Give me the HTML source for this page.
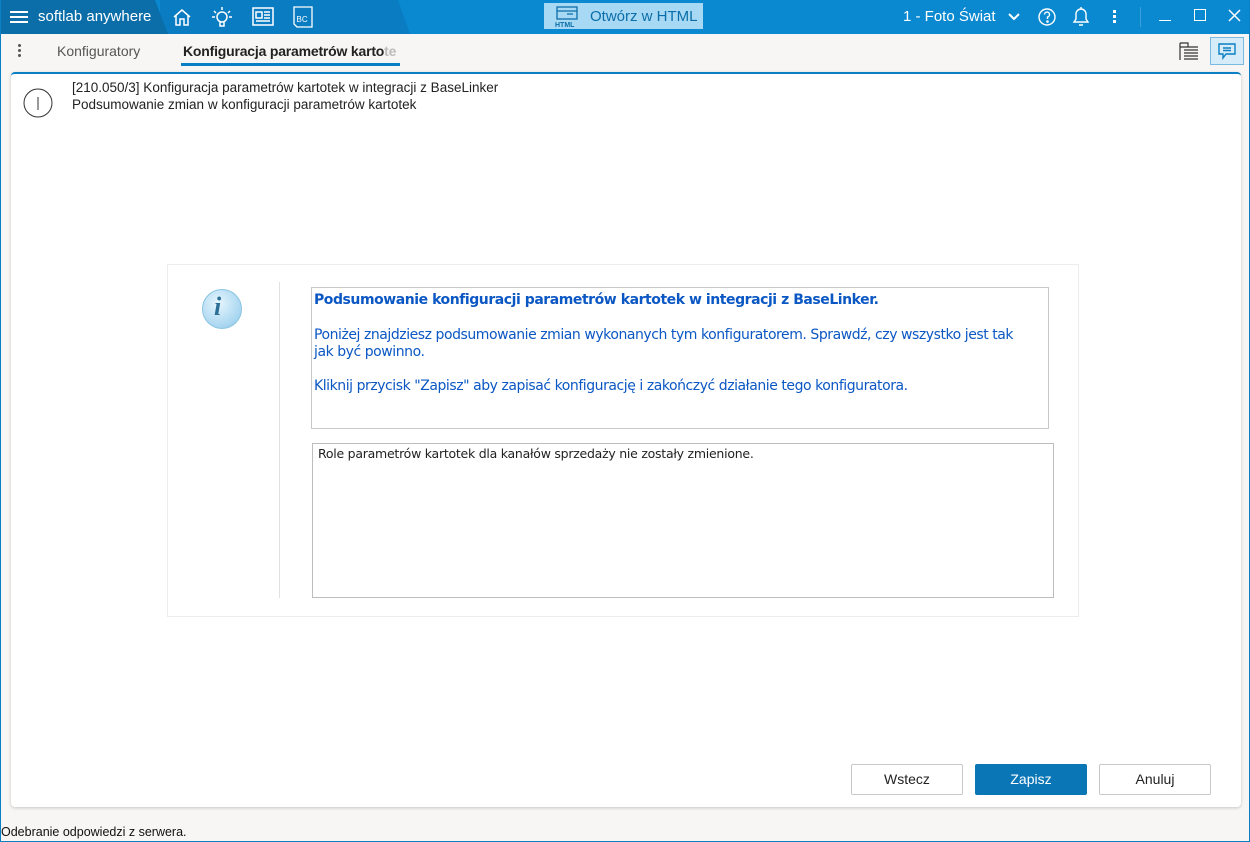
<!DOCTYPE html>
<html><head><meta charset="utf-8"><style>
*{box-sizing:border-box;margin:0;padding:0}
html,body{width:1250px;height:842px;overflow:hidden}
body{background:#f7f6f4;font-family:"Liberation Sans",sans-serif;position:relative}
.frame{position:absolute;left:0;top:0;width:1250px;height:842px;border:1px solid #0a7fc4;border-top:none;pointer-events:none}
.top{position:absolute;left:0;top:0;width:1250px;height:34px;background:#0a88d0}
.mid{position:absolute;left:160px;top:0;height:34px;width:250px;background:#0a7dc2;clip-path:polygon(0 0,calc(100% - 12px) 0,100% 100%,0 100%)}
.t{position:absolute;color:#fff;font-size:15px}
.tabs{position:absolute;left:0;top:34px;width:1250px;height:34px;background:#f7f6f4}
.panel{position:absolute;left:11px;top:72px;width:1230px;height:735px;background:#fff;border-top:2px solid #0a7fc4;border-radius:4px;box-shadow:0 1px 3px rgba(0,0,0,.2)}
.btn{position:absolute;top:764px;width:112px;height:31px;border:1px solid #c8c8c8;border-radius:2px;background:#fff;font-size:14px;text-align:center;line-height:29px;color:#222}
.blue{color:#0b57c4;font-family:"DejaVu Sans",sans-serif;font-size:14px;letter-spacing:-0.45px}
</style></head><body>
<div class="top"></div>
<div class="mid"></div>
<div style="position:absolute;left:0;top:0;width:168px;height:34px;background:#0b6ea9;clip-path:polygon(0 0,155px 0,168px 34px,0 34px)"></div>
<div style="position:absolute;left:10px;top:11px;width:18px;height:2px;background:#fff;box-shadow:0 5px 0 #fff,0 10px 0 #fff"></div>
<div class="t" style="left:38px;top:8px">softlab anywhere</div>
<svg style="position:absolute;left:172px;top:7px" width="20" height="20" fill="none" stroke="#fff" stroke-width="1.5"><path d="M2 10L10 3l8 7M4 8v10h4v-6h4v6h4V8"/></svg>
<svg style="position:absolute;left:211px;top:6px" width="22" height="22" fill="none" stroke="#fff" stroke-width="1.5"><circle cx="11" cy="11" r="5"/><path d="M9 16v4h4v-4M11 1v3M3 5l2 2M19 5l-2 2M1 11h3M18 11h3"/></svg>
<svg style="position:absolute;left:252px;top:7px" width="22" height="20" fill="none" stroke="#fff" stroke-width="1.5"><rect x="1" y="1" width="20" height="17"/><rect x="4" y="5" width="6" height="6"/><path d="M12 5h6M12 8h6M12 11h6M4 14h14"/></svg>
<svg style="position:absolute;left:292px;top:6px" width="22" height="22" fill="none" stroke="#fff" stroke-width="1.3"><path d="M2 1h18v20H5l-3-3z"/><text x="4.5" y="16" fill="#fff" stroke="none" font-size="8" font-family="Liberation Sans">BC</text></svg>
<div style="position:absolute;left:544px;top:3px;width:159px;height:26px;background:#a7d8f4"></div>
<svg style="position:absolute;left:555px;top:6px" width="26" height="22" fill="none" stroke="#0b6ea9" stroke-width="1.3"><rect x="2" y="1" width="20" height="12"/><path d="M2 5h20M12 8h6"/><text x="0" y="21" fill="#0b6ea9" stroke="none" font-size="7" font-weight="bold" font-family="Liberation Sans">HTML</text></svg>
<div style="position:absolute;left:590px;top:8px;color:#0b6ea9;font-size:15px">Otwórz w HTML</div>
<div class="t" style="left:903px;top:8px">1 - Foto Świat</div>
<svg style="position:absolute;left:1008px;top:13px" width="12" height="8" fill="none" stroke="#fff" stroke-width="2"><path d="M1 1l5 5 5-5"/></svg>
<svg style="position:absolute;left:1037px;top:7px" width="20" height="20" fill="none" stroke="#fff" stroke-width="1.4"><circle cx="10" cy="10" r="8"/><path d="M7.5 7.5a2.5 2.5 0 1 1 3 2.5v2"/><circle cx="10.5" cy="14.5" r=".6" fill="#fff"/></svg>
<svg style="position:absolute;left:1071px;top:6px" width="20" height="22" fill="none" stroke="#fff" stroke-width="1.4"><path d="M3 16h14l-2-3V8a5 5 0 0 0-10 0v5zM8 19h4M10 1v2"/></svg>
<div style="position:absolute;left:1113px;top:10px;width:3px;height:3px;background:#fff;box-shadow:0 5px 0 #fff,0 10px 0 #fff"></div>
<div style="position:absolute;left:1140px;top:7px;width:1px;height:20px;background:#3aa0dc"></div>
<div style="position:absolute;left:1159px;top:20px;width:12px;height:1px;background:#fff"></div>
<div style="position:absolute;left:1194px;top:9px;width:12px;height:12px;border:1.5px solid #fff"></div>
<svg style="position:absolute;left:1228px;top:9px" width="13" height="13" stroke="#fff" stroke-width="1.5"><path d="M1 1l11 11M12 1L1 12"/></svg>
<div class="tabs"></div>
<div style="position:absolute;left:18px;top:44px;width:3px;height:3px;background:#555;box-shadow:0 5px 0 #555,0 10px 0 #555;border-radius:50%"></div>
<div style="position:absolute;left:57px;top:43px;font-size:14px;color:#555">Konfiguratory</div>
<div style="position:absolute;left:183px;top:43px;font-size:14px;color:#222;font-weight:bold;letter-spacing:-0.2px">Konfiguracja parametrów karto<span style="color:#bbb">te</span></div>
<div style="position:absolute;left:181px;top:63px;width:219px;height:3px;background:#0a7fc4"></div>
<svg style="position:absolute;left:1178px;top:41px" width="22" height="20" fill="none" stroke="#333" stroke-width="1.2"><path d="M2 2v17M2 2h8v4H2M6 6h14M6 9h14M6 12h14M6 15h14M6 18h14"/></svg>
<div style="position:absolute;left:1210px;top:37px;width:34px;height:28px;background:#d7ecf9;border:1px solid #7ab9e2"></div>
<svg style="position:absolute;left:1218px;top:43px" width="18" height="18" fill="none" stroke="#0a7fc4" stroke-width="1.4"><path d="M1 1h16v10H8l-3 4v-4H1z"/><path d="M5 5h8M5 7.5h8"/></svg>
<div class="panel"></div>
<svg style="position:absolute;left:23px;top:88px" width="30" height="30" fill="none" stroke="#333" stroke-width="1"><circle cx="15" cy="15" r="14"/><path d="M15 9v13"/></svg>
<div style="position:absolute;left:72px;top:79px;font-size:13.5px;color:#222;line-height:17px">[210.050/3] Konfiguracja parametrów kartotek w integracji z BaseLinker<br>Podsumowanie zmian w konfiguracji parametrów kartotek</div>
<div style="position:absolute;left:167px;top:264px;width:912px;height:353px;border:1px solid #ececec"></div>
<div style="position:absolute;left:279px;top:282px;width:1px;height:316px;background:#e0e0e0"></div>
<div style="position:absolute;left:202px;top:289px;width:40px;height:40px;border-radius:50%;background:radial-gradient(circle at 40% 35%,#e6f5fd,#a8d6f0 70%,#7dbde2);border:1px solid #8cc4e3"></div>
<div style="position:absolute;left:214px;top:292px;font:italic bold 26px 'Liberation Serif',serif;color:#2b6f96">i</div>
<div style="position:absolute;left:311px;top:287px;width:738px;height:142px;border:1px solid #c8c8c8"></div>
<div class="blue" style="position:absolute;left:314px;top:292px;font-weight:bold">Podsumowanie konfiguracji parametrów kartotek w integracji z BaseLinker.</div>
<div class="blue" style="position:absolute;left:314px;top:327px;width:712px;line-height:17px">Poniżej znajdziesz podsumowanie zmian wykonanych tym konfiguratorem. Sprawdź, czy wszystko jest tak jak być powinno.</div>
<div class="blue" style="position:absolute;left:314px;top:378px">Kliknij przycisk "Zapisz" aby zapisać konfigurację i zakończyć działanie tego konfiguratora.</div>
<div style="position:absolute;left:312px;top:443px;width:742px;height:155px;border:1px solid #bdbdbd"></div>
<div style="position:absolute;left:318px;top:446px;color:#222;font-family:'DejaVu Sans',sans-serif;font-size:12.5px;letter-spacing:-0.25px">Role parametrów kartotek dla kanałów sprzedaży nie zostały zmienione.</div>
<div class="btn" style="left:851px">Wstecz</div>
<div class="btn" style="left:975px;background:#0a76b6;border-color:#0a76b6;color:#fff">Zapisz</div>
<div class="btn" style="left:1099px">Anuluj</div>
<div style="position:absolute;left:1px;top:825px;font-size:12.5px;color:#111">Odebranie odpowiedzi z serwera.</div>
<div class="frame"></div>
</body></html>
